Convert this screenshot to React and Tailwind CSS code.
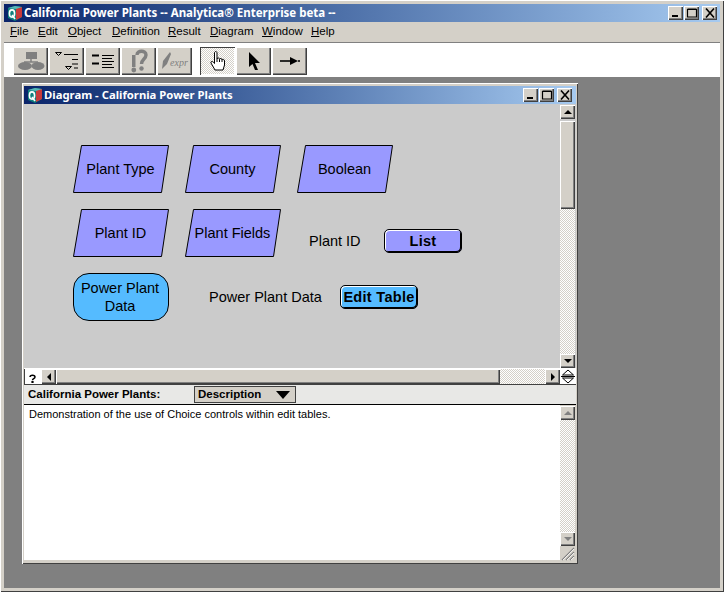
import React from "react";

const bevel = "bg-[#d4d0c8] shadow-[inset_1px_1px_0_#fff,inset_-1px_-1px_0_#404040,inset_-2px_-2px_0_#808080]";
const dither = "bg-[repeating-conic-gradient(#d4d0c8_0_25%,#fff_0_50%)] bg-[length:2px_2px]";
const ui = "font-['Noto_Sans',sans-serif]";
const arial = "font-['Liberation_Sans',Arial,sans-serif]";

function Logo() {
  return (
    <svg width="16" height="16" viewBox="0 0 16 16" className="shrink-0">
      <path d="M1 3 L8 1 L15 2 L15 12 L8 16 L1 13 Z" fill="#0f7f7c" />
      <path d="M9 3 L15 2 L15 12 L9 15 Z" fill="#c83a3a" />
      <path d="M1 3 L8 1 L15 2 L9 4 Z" fill="#58b8b8" />
      <ellipse cx="5" cy="8.5" rx="2.6" ry="3.6" fill="none" stroke="#fff" strokeWidth="1.6" />
      <path d="M5 10 L8 14" stroke="#fff" strokeWidth="1.5" />
    </svg>
  );
}

function WinBtn({ kind }) {
  return (
    <div className={`${bevel} w-[15px] h-[14px] flex items-center justify-center shrink-0`}>
      <svg width="12" height="10" viewBox="0 0 12 10">
        {kind === "min" && <rect x="2" y="7" width="6" height="2" fill="#000" />}
        {kind === "max" && <path d="M1.5 1.5 H10.5 V9 H1.5 Z M1.5 1 H10.5" fill="none" stroke="#000" strokeWidth="1.2" />}
        {kind === "close" && <path d="M2 0.5 L10 9.5 M10 0.5 L2 9.5" stroke="#000" strokeWidth="1.6" />}
      </svg>
    </div>
  );
}

function TitleBar({ title, className, textSize }) {
  return (
    <div className={`flex items-center bg-gradient-to-r from-[#0a246a] to-[#a6caf0] ${className}`}>
      <Logo />
      <span className={`${ui} ${textSize} ml-[1px] text-white font-bold whitespace-nowrap leading-none`}>{title}</span>
      <div className="ml-auto flex items-center">
        <WinBtn kind="min" />
        <div className="w-px" />
        <WinBtn kind="max" />
        <div className="w-[3px]" />
        <WinBtn kind="close" />
      </div>
    </div>
  );
}

function Tool({ children, pressed, className = "" }) {
  return (
    <div
      className={`w-[35px] h-[28px] flex items-center justify-center shrink-0 ${className} ${
        pressed
          ? `${dither} shadow-[inset_1px_1px_0_#404040,inset_-1px_-1px_0_#fff]`
          : bevel
      }`}
    >
      {children}
    </div>
  );
}

function Arrow({ dir, color = "#000" }) {
  const d = { up: "M1 7 L5 3 L9 7 Z", down: "M1 3 L9 3 L5 7 Z", left: "M7 1 L3 5 L7 9 Z", right: "M3 1 L7 5 L3 9 Z" }[dir];
  return (
    <svg width="10" height="10" viewBox="0 0 10 10">
      <path d={d} fill={color} />
    </svg>
  );
}

function ScrollBtn({ dir, color, className = "" }) {
  return (
    <div className={`${bevel} w-[15px] h-[14px] flex items-center justify-center shrink-0 ${className}`}>
      <Arrow dir={dir} color={color} />
    </div>
  );
}

function Para({ x, y, label }) {
  return (
    <div className="absolute w-[95px] h-[49px] flex items-center justify-center" style={{ left: x, top: y }}>
      <svg width="97" height="49" viewBox="0 0 97 49" className="absolute left-0 top-0">
        <path d="M8.5 0.5 H95.5 L88.5 47.5 H0.5 Z" fill="#9999ff" stroke="#000" strokeWidth="1" />
      </svg>
      <span className={`${arial} relative text-[14.5px] leading-none text-[#000] whitespace-nowrap`}>{label}</span>
    </div>
  );
}

function DiagramBtn({ x, y, label, color }) {
  return (
    <div
      className={`${arial} absolute w-[78px] h-[24px] pt-[1px] flex items-center justify-center rounded-[5px] border border-black font-bold text-[14.5px] tracking-[0.3px] text-black shadow-[inset_1px_1px_0_#fff,inset_-1px_-1px_0_#000] ${color}`}
      style={{ left: x, top: y }}
    >
      {label}
    </div>
  );
}

function Diagram() {
  return (
    <div className="relative flex-1 bg-[#cbcbcb]">
      <Para x={49} y={41} label="Plant Type" />
      <Para x={161} y={41} label="County" />
      <Para x={273} y={41} label="Boolean" />
      <Para x={49} y={105} label="Plant ID" />
      <Para x={161} y={105} label="Plant Fields" />
      <span className={`${arial} absolute left-[285px] top-[129px] text-[14.5px] leading-[16px] text-black whitespace-nowrap`}>Plant ID</span>
      <DiagramBtn x={360} y={125} label="List" color="bg-[#9999ff]" />
      <div className={`${arial} absolute left-[49px] top-[169px] w-[96px] h-[48px] rounded-[16px] border border-black bg-[#55bbff] flex items-center justify-center text-center text-[14.5px] leading-[18px] text-black`}>
        <span className="-ml-[2px]">Power Plant<br />Data</span>
      </div>
      <span className={`${arial} absolute left-[185px] top-[185px] text-[14.5px] leading-[16px] text-black whitespace-nowrap`}>Power Plant Data</span>
      <DiagramBtn x={316} y={181} label="Edit Table" color="bg-[#55bbff]" />
    </div>
  );
}

function Tools() {
  return (
    <div className="h-[35px] bg-white flex items-start pt-[4px] pl-[9px] border-t border-[#808080]">
      <div className="flex gap-px">
        <Tool>
          <svg width="28" height="20" viewBox="0 0 28 20">
            <rect x="9" y="1" width="11" height="7" fill="#808080" />
            <path d="M14 8 V11 M7 11 H21" stroke="#808080" strokeWidth="1.5" />
            <ellipse cx="8" cy="15" rx="7" ry="4" fill="#808080" />
            <ellipse cx="21" cy="15" rx="6.5" ry="4" fill="#808080" />
          </svg>
        </Tool>
        <Tool>
          <svg width="26" height="20" viewBox="0 0 26 20">
            <path d="M1.5 1.5 H7.5 L4.5 4.5 Z M11.5 15.5 H17.5 L14.5 18.5 Z" fill="#d4d0c8" stroke="#000" strokeWidth="1" />
            <path d="M10 3.5 H24 M18 8.5 H24 M18 13 H24 M20 17 H24" stroke="#000" strokeWidth="1" />
          </svg>
        </Tool>
        <Tool>
          <svg width="24" height="16" viewBox="0 0 24 16">
            <path d="M1 2.5 H8 M1 10.5 H8" stroke="#000" strokeWidth="2.2" />
            <path d="M11 2.5 H23 M11 5.5 H21 M11 8.5 H23 M11 11.5 H21 M11 14.5 H23" stroke="#000" strokeWidth="1" />
          </svg>
        </Tool>
        <Tool>
          <svg width="18" height="24" viewBox="0 0 18 24">
            <path d="M7 6 C7 1 16 1 16 6 C16 10 11.5 10 11.5 15" fill="none" stroke="#808080" strokeWidth="3.4" />
            <rect x="2" y="6" width="3.5" height="12" fill="#808080" />
            <circle cx="3.8" cy="21" r="2.4" fill="#808080" />
            <circle cx="11.5" cy="19.5" r="2.2" fill="#808080" />
          </svg>
        </Tool>
        <Tool>
          <svg width="30" height="20" viewBox="0 0 30 20">
            <path d="M2 18 L3 10 L10 1 L11 3 L7 13 Z" fill="#808080" />
            <text x="10" y="15" fontFamily="Liberation Serif, serif" fontStyle="italic" fontSize="10" fill="#808080">expr</text>
          </svg>
        </Tool>
      </div>
      <div className="flex gap-px ml-[8px]">
        <Tool pressed>
          <svg width="18" height="22" viewBox="0 0 18 22">
            <path d="M6 20 L2 13 C1.5 11 3.5 11 4.5 12.5 L5.5 13.5 V3 C5.5 1 8 1 8 3 V9 C8.5 7.5 10.5 7.5 10.5 9.5 C11 8 13 8 13 10 C13.5 9 15.5 9 15.5 11 V15 L14 20 Z" fill="#fff" stroke="#000" strokeWidth="1" />
            <path d="M8 9 V12 M10.5 9.5 V12 M13 10 V12" stroke="#000" strokeWidth="1" />
          </svg>
        </Tool>
        <Tool>
          <svg width="14" height="20" viewBox="0 0 14 20">
            <path d="M2 1 L13 12 H8 L11 19 L8 19 L5.5 13 L2 16 Z" fill="#000" />
          </svg>
        </Tool>
        <Tool>
          <svg width="20" height="10" viewBox="0 0 20 10">
            <path d="M0 5 H11" stroke="#000" strokeWidth="1.6" />
            <path d="M10 1 L18 5 L10 9 Z" fill="#000" />
            <path d="M18 5 H20" stroke="#000" strokeWidth="1.4" />
          </svg>
        </Tool>
      </div>
    </div>
  );
}

function ChildWindow() {
  return (
    <div className="w-[556px] h-[481px] flex flex-col bg-[#d4d0c8] pt-[3px] pl-[2px] pr-[2px] pb-[3px] shadow-[inset_1px_1px_0_#fff,inset_-1px_-1px_0_#404040]">
      <TitleBar title="Diagram - California Power Plants" className="h-[18px] pl-[3px] pr-[4px]" textSize="text-[11.3px]" />
      <div className="flex h-[264px]">
        <Diagram />
        <div className="w-[16px] flex flex-col pr-px bg-[#cbcbcb]">
          <ScrollBtn dir="up" className="mt-px" />
          <div className={`${bevel} h-[88px] mt-[2px]`} />
          <div className={`flex-1 ${dither}`} />
          <ScrollBtn dir="down" />
        </div>
      </div>
      <div className="flex h-[17px] border-b border-[#404040] border-t border-t-white">
        <div className="w-[17px] bg-white flex items-end justify-center pb-[1px] shadow-[inset_1px_0_0_#404040]">
          <svg width="7" height="9" viewBox="0 0 7 9">
            <path d="M1 3 C1 0.5 6 0.5 6 3 C6 4.6 3.5 4.6 3.5 6.2" fill="none" stroke="#000" strokeWidth="1.5" />
            <rect x="2.4" y="7" width="2.2" height="2" fill="#000" />
          </svg>
        </div>
        <ScrollBtn dir="left" className="!h-[15px]" />
        <div className={`${bevel} w-[444px]`} />
        <div className={`flex-1 ${dither}`} />
        <ScrollBtn dir="right" className="!h-[15px]" />
        <div className="w-[16px] bg-white flex items-center justify-center">
          <svg width="14" height="15" viewBox="0 0 14 15">
            <path d="M7 1 L12.5 6 H1.5 Z M1.5 9 H12.5 L7 14 Z" fill="none" stroke="#000" strokeWidth="1" />
            <path d="M0 7.5 H14" stroke="#000" strokeWidth="1" />
          </svg>
        </div>
      </div>
      <div className={`${arial} h-[20px] bg-[#e8e8e6] border-b border-black flex items-center pl-[4px]`}>
        <span className="w-[166px] font-bold text-[11.5px] text-black whitespace-nowrap">California Power Plants:</span>
        <div className="w-[102px] h-[17px] bg-[#d4d0c8] border border-[#404040] flex items-center pl-[3px] pr-[5px] justify-between">
          <span className="font-bold text-[11.5px] text-black">Description</span>
          <svg width="14" height="8" viewBox="0 0 14 8">
            <path d="M0 0 H14 L7 8 Z" fill="#000" />
          </svg>
        </div>
      </div>
      <div className="flex flex-1 min-h-0">
        <div className={`${arial} flex-1 bg-white pl-[5px] pt-[2px] text-[11px] leading-[15px] text-black border-b border-[#d4d0c8]`}>
          Demonstration of the use of Choice controls within edit tables.
        </div>
        <div className="w-[16px] flex flex-col pr-px">
          <ScrollBtn dir="up" color="#808080" className="mt-px" />
          <div className={`flex-1 ${dither}`} />
          <ScrollBtn dir="down" color="#808080" />
          <div className={`h-[15px] bg-[#d4d0c8] flex items-end justify-end`}>
            <svg width="14" height="14" viewBox="0 0 14 14">
              <path d="M1 13 L13 1 M5 13 L13 5 M9 13 L13 9" stroke="#808080" strokeWidth="1.2" />
              <path d="M2 13 L13 2 M6 13 L13 6 M10 13 L13 10" stroke="#fff" strokeWidth="0.8" />
            </svg>
          </div>
        </div>
      </div>
    </div>
  );
}

export default function App() {
  const menus = [
    ["F", "ile", "w-[28px]"],
    ["E", "dit", "w-[30px]"],
    ["O", "bject", "w-[44px]"],
    ["D", "efinition", "w-[56px]"],
    ["R", "esult", "w-[42px]"],
    ["D", "iagram", "w-[52px]"],
    ["W", "indow", "w-[49px]"],
    ["H", "elp", "w-[30px]"],
  ];
  return (
    <div className="w-[724px] h-[592px] overflow-hidden bg-[#d4d0c8] flex flex-col pt-[4px] px-[4px] pb-[4px] shadow-[inset_1px_1px_0_#fff,inset_-1px_-1px_0_#404040]">
      <TitleBar title="California Power Plants -- Analytica® Enterprise beta --" className="h-[18px] pl-[3px] pr-[3px]" textSize="text-[11.5px]" />
      <div className={`${arial} h-[20px] flex items-center pl-[6px] text-[11.5px] text-black`}>
        {menus.map((m, i) => (
          <span key={i} className={`whitespace-nowrap ${m[2]}`}>
            <span className="underline">{m[0]}</span>
            {m[1]}
          </span>
        ))}
      </div>
      <Tools />
      <div className="flex-1 bg-[#808080] pl-[18px] pt-[6px]">
        <ChildWindow />
      </div>
    </div>
  );
}
